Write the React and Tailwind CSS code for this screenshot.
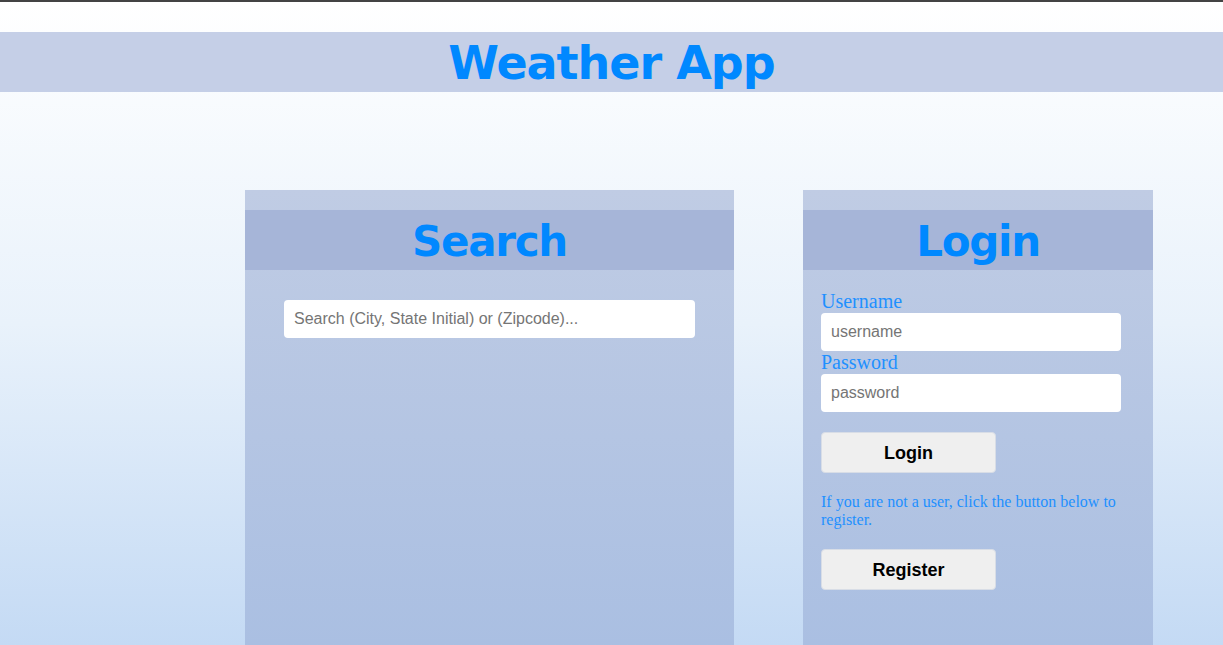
export default function App() {
  const serif = { fontFamily: '"Liberation Serif", "Times New Roman", serif' };
  const sans = 'font-["Liberation_Sans",Arial,sans-serif]';

  return (
    <div className="h-[645px] overflow-hidden border-t-2 border-[#444] bg-gradient-to-b from-white via-[#e9f2fb] to-[#c4daf4]">
      <div className="mt-[30px] flex h-[60px] items-center justify-center bg-[#c5cfe7] pt-[2px]">
        <h1 className="font-['DejaVu_Sans',Verdana,sans-serif] text-[46px] font-bold leading-none tracking-[-1px] text-[#0088ff]">
          Weather App
        </h1>
      </div>

      <div className="mt-[98px] flex items-start gap-[69px] pl-[245px]">
        <section className="flex h-[455px] w-[489px] flex-col bg-gradient-to-b from-[#c0cce4] to-[#aabfe2] pt-5">
          <div className="flex h-[60px] items-center justify-center bg-[#a6b5d8] pt-[4px]">
            <h2 className="font-['DejaVu_Sans',Verdana,sans-serif] text-[42px] font-bold leading-none tracking-[-1.3px] text-[#0088ff]">
              Search
            </h2>
          </div>
          <div className="px-[39px] pt-[30px]">
            <input
              type="text"
              placeholder="Search (City, State Initial) or (Zipcode)..."
              className={`h-[38px] w-full rounded bg-white px-[10px] text-base text-black placeholder:text-[#757575] outline-none ${sans}`}
            />
          </div>
        </section>

        <section className="flex h-[455px] w-[350px] flex-col bg-gradient-to-b from-[#c0cce4] to-[#aabfe2] pt-5">
          <div className="flex h-[60px] items-center justify-center bg-[#a6b5d8] pt-[4px]">
            <h2 className="font-['DejaVu_Sans',Verdana,sans-serif] text-[42px] font-bold leading-none tracking-[-1.3px] text-[#0088ff]">
              Login
            </h2>
          </div>
          <form className="flex flex-col px-[18px] pt-5" onSubmit={(e) => e.preventDefault()}>
            <label style={serif} className="text-[20px] leading-[23px] text-[#1e90ff]">Username</label>
            <input
              type="text"
              placeholder="username"
              className={`h-[38px] w-[300px] rounded bg-white px-[10px] text-base placeholder:text-[#757575] outline-none ${sans}`}
            />
            <label style={serif} className="text-[20px] leading-[23px] text-[#1e90ff]">Password</label>
            <input
              type="password"
              placeholder="password"
              className={`h-[38px] w-[300px] rounded bg-white px-[10px] text-base placeholder:text-[#757575] outline-none ${sans}`}
            />
            <button className={`mt-5 h-[41px] w-[175px] rounded border border-[#d8dde6] bg-[#efefef] text-lg font-bold text-black ${sans}`}>
              Login
            </button>
            <p style={serif} className="mt-5 w-[300px] text-[16px] leading-[18px] text-[#1e90ff]">
              If you are not a user, click the button below to register.
            </p>
            <button className={`mt-5 h-[41px] w-[175px] rounded border border-[#d8dde6] bg-[#efefef] text-lg font-bold text-black ${sans}`}>
              Register
            </button>
          </form>
        </section>
      </div>
    </div>
  );
}
